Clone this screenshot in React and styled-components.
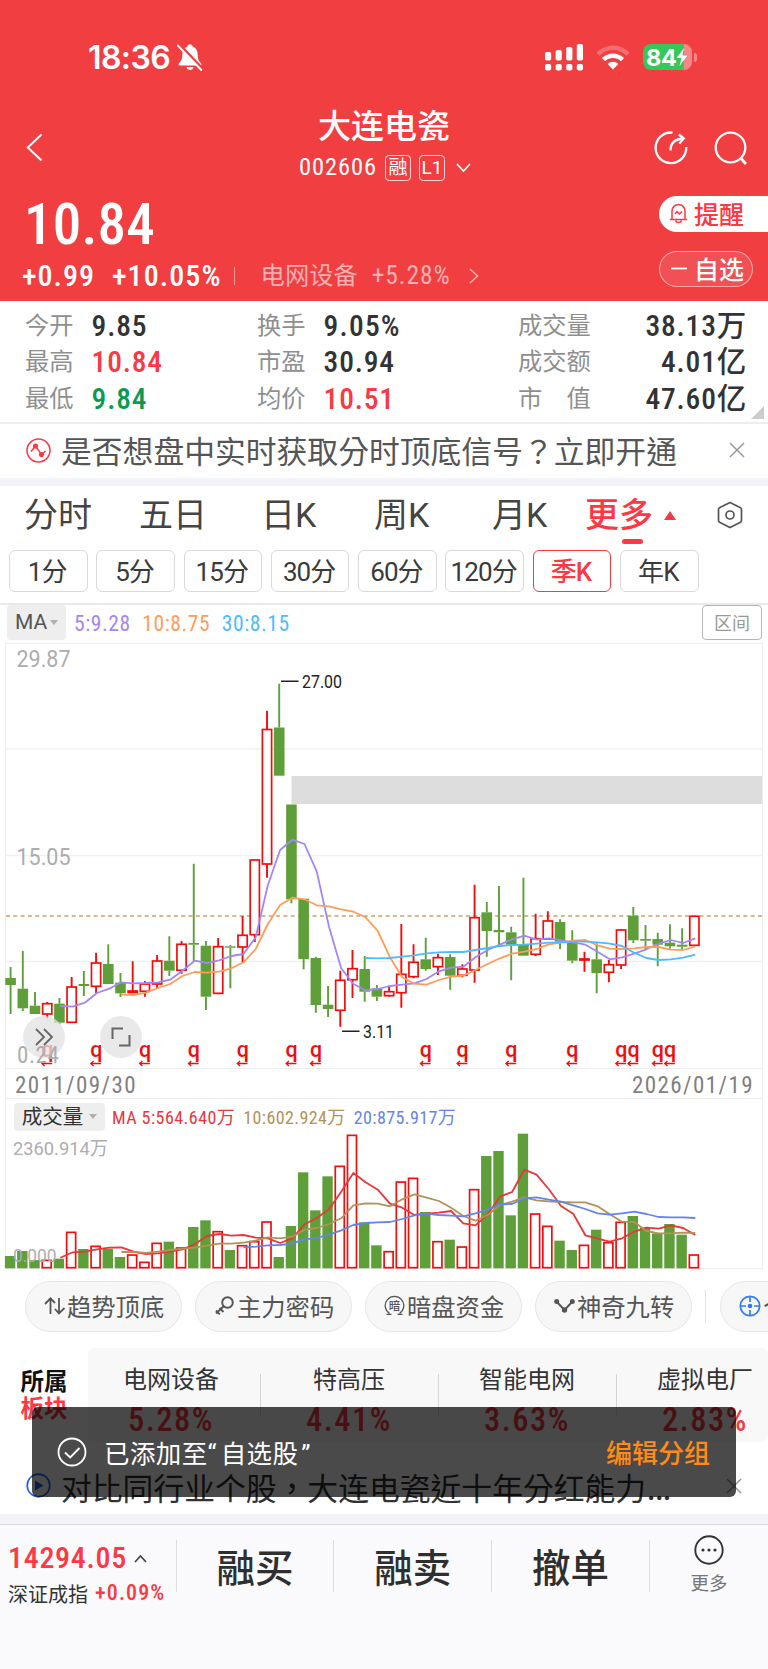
import React from "react";
import styled, { createGlobalStyle, css } from "styled-components";

const RED = "#fb3844";
const UP = "#f20d0d";
const DOWN = "#5e9f3a";

const GlobalStyle = createGlobalStyle`
* {
  box-sizing: border-box;
}
body {
  margin: 0;
  background: #fff;
  font-family: Roboto, "Noto Sans CJK SC", sans-serif;
  color: #333;
}
svg {
  display: block;
  flex: none;
}
`;

const Page = styled.div`
  position: relative;
  width: 768px;
  height: 1669px;
  overflow: hidden;
  display: flex;
  flex-direction: column;
`;

const Num = styled.span`
  font-family: Roboto, "Noto Sans CJK SC", sans-serif;
  font-stretch: condensed;
  font-size: ${(p) => p.$size}px;
  font-weight: ${(p) => p.$weight || 500};
  letter-spacing: ${(p) => p.$gap || 0}px;
  line-height: ${(p) => p.$line || p.$size}px;
  color: ${(p) => p.$color || "inherit"};
  white-space: nowrap;
`;

/* ---------- header ---------- */

const Header = styled.header`
  flex: none;
  height: 301px;
  background: #f03e41;
  color: #fff;
`;

const StatusBar = styled.div`
  height: 100px;
  padding: 14px 71px 0 88px;
  display: flex;
  align-items: center;
`;

const Clock = styled.span`
  width: 89px;
  font-family: Inter, sans-serif;
  font-size: 32px;
  font-weight: 600;
  letter-spacing: -0.6px;
`;

const StatusIcons = styled.div`
  margin-left: auto;
  display: flex;
  align-items: center;
  gap: 13px;
`;

const TitleBar = styled.div`
  height: 92px;
  padding: 0 20px 0 26px;
  display: grid;
  grid-template-columns: 90px 1fr 96px;
`;

const TitleBlock = styled.div`
  display: flex;
  flex-direction: column;
  align-items: center;
`;

const Title = styled.h1`
  margin: 3px 0 0;
  font-size: 33px;
  line-height: 48px;
  font-weight: 500;
`;

const CodeLine = styled.div`
  height: 33px;
  padding-left: 4px;
  display: flex;
  align-items: center;
  gap: 8px;
`;

const Tag = styled.span`
  width: 26px;
  height: 26px;
  border: 1.5px solid rgba(255, 255, 255, 0.8);
  border-radius: 4px;
  display: flex;
  align-items: center;
  justify-content: center;
  font-size: 19px;
  line-height: 20px;
`;

const TitleIcons = styled.div`
  display: flex;
  justify-content: flex-end;
  gap: 26px;
  padding-top: 31px;
`;

const BackIcon = styled.div`
  padding-top: 33px;
`;

const Quote = styled.div`
  height: 109px;
  display: flex;
  justify-content: space-between;
`;

const QuoteLeft = styled.div`
  display: flex;
  flex-direction: column;
`;

const Price = styled.div`
  height: 62px;
  display: flex;
  align-items: center;
  padding: 2px 0 0 24px;
`;

const ChangeLine = styled.div`
  height: 44px;
  padding: 0 0 1px 22px;
  display: flex;
  align-items: center;
`;

const Divider = styled.i`
  flex: none;
  width: 1px;
  height: ${(p) => p.$h}px;
  background: ${(p) => p.$color};
  margin: ${(p) => p.$m || 0};
`;

const Sector = styled.span`
  font-size: 24.3px;
  line-height: 30px;
  color: rgba(255, 255, 255, 0.6);
  margin-right: 14px;
`;

const QuoteButtons = styled.div`
  width: 109px;
  padding-top: 4px;
  display: flex;
  flex-direction: column;
  gap: 19px;
`;

const Pill = styled.button`
  height: 36px;
  margin: 0;
  padding: 0 0 2px 10px;
  border: none;
  font-family: inherit;
  font-size: 25px;
  font-weight: 500;
  display: flex;
  align-items: center;
  gap: 6px;
  ${(p) =>
    p.$solid
      ? css`
          background: #fff;
          color: ${RED};
          border-radius: 18px 0 0 18px;
        `
      : css`
          width: 94px;
          background: rgba(255, 255, 255, 0.1);
          color: #fff;
          border: 1px solid rgba(255, 255, 255, 0.5);
          border-radius: 18px;
        `}
`;

/* ---------- stats ---------- */

const Stats = styled.section`
  position: relative;
  flex: none;
  height: 123px;
  padding: 7px 21px 0 25px;
  border-bottom: 2px solid #eee;
  display: grid;
  grid-template-columns: 232px 261px 1fr;
  grid-auto-rows: 36.6px;
`;

const Stat = styled.div`
  display: flex;
  align-items: center;
  justify-content: ${(p) => (p.$spread ? "space-between" : "flex-start")};
  gap: 18px;
`;

const StatLabel = styled.span`
  font-size: 24.3px;
  line-height: 30px;
  padding-bottom: 1px;
  color: #8f8f8f;
`;

const Corner = styled.i`
  position: absolute;
  right: 4px;
  bottom: 3px;
  border-style: solid;
  border-width: 0 0 13px 13px;
  border-color: transparent transparent #ccc transparent;
`;

const Notice = styled.div`
  flex: none;
  height: ${(p) => p.$h}px;
  padding: ${(p) => p.$pad};
  display: flex;
  align-items: center;
  font-family: Roboto, "Noto Sans CJK TC", sans-serif;
`;

const NoticeText = styled.span`
  flex: 1;
  margin-left: 10px;
  padding-top: 6px;
  font-size: 30.8px;
  line-height: 40px;
  white-space: nowrap;
  color: ${(p) => p.$color};
`;

const Ellipsis = styled.span`
  font-family: Roboto, sans-serif;
  font-size: 38px;
  line-height: 1;
`;

const Band = styled.div`
  flex: none;
  height: ${(p) => p.$h}px;
  background: #f3f4f9;
`;

/* ---------- period tabs ---------- */

const Tabs = styled.nav`
  flex: none;
  height: 61px;
  padding: 0 26px 3px 24px;
  display: grid;
  grid-template-columns: 115px 122px 113px 118px 93px 132px 1fr;
  align-items: center;
`;

const Tab = styled.span`
  position: relative;
  display: flex;
  align-items: center;
  gap: 11px;
  font-size: 34px;
  line-height: 58px;
  font-weight: ${(p) => (p.$active ? 500 : 400)};
  color: ${(p) => (p.$active ? RED : "#444")};
`;

const Underline = styled.i`
  position: absolute;
  left: 37px;
  bottom: 0;
  width: 21px;
  height: 5px;
  border-radius: 3px;
  background: ${RED};
`;

const Periods = styled.div`
  flex: none;
  height: 56px;
  padding: 3px 9px 0;
  display: flex;
  gap: 8.8px;
`;

const Period = styled.button`
  flex: none;
  width: 78.5px;
  height: 42px;
  padding: 0 2px 4px 0;
  background: #fff;
  border: 1.3px solid ${(p) => (p.$active ? RED : "#d9d9d9")};
  border-radius: 6px;
  color: ${(p) => (p.$active ? RED : "#3a3a3a")};
  font-family: inherit;
  font-size: 26px;
  font-weight: ${(p) => (p.$active ? 500 : 400)};
  letter-spacing: -0.9px;
  white-space: nowrap;
  display: flex;
  align-items: center;
  justify-content: center;
`;

/* ---------- chart ---------- */

const ChartHead = styled.div`
  flex: none;
  height: 40px;
  border-top: 2px solid #e9e9e9;
  padding: 0 6px 0 7px;
  display: flex;
  align-items: flex-start;
`;

const Picker = styled.div`
  width: ${(p) => p.$w}px;
  height: ${(p) => p.$h}px;
  background: #eee;
  border-radius: 4px;
  display: flex;
  align-items: center;
  justify-content: center;
  gap: ${(p) => p.$gap}px;
  font-size: ${(p) => p.$size}px;
  line-height: ${(p) => p.$h}px;
  color: ${(p) => p.$color};
`;

const Legend = styled.div`
  display: flex;
  margin-left: ${(p) => p.$left}px;
  gap: ${(p) => p.$space}px;
`;

const RangeButton = styled.button`
  margin-left: auto;
  width: 60px;
  height: 35px;
  padding: 0 0 2px;
  background: #fff;
  border: 1.4px solid #b5b5b5;
  border-radius: 4px;
  color: #999;
  font-family: inherit;
  font-size: 18px;
`;

const ChartFrame = styled.section`
  position: relative;
  flex: none;
  width: 758px;
  margin-left: 5px;
  border: 1px solid #ededed;
  svg {
    overflow: visible;
  }
`;

const Dates = styled.div`
  height: 31px;
  padding: 4px 8px 0 9px;
  border-top: 1px solid #ededed;
  border-bottom: 1px solid #ededed;
  display: flex;
  align-items: center;
  justify-content: space-between;
`;

const VolumeHead = styled.div`
  height: 34px;
  padding: 4px 8px 0;
  display: flex;
  align-items: flex-start;
`;

const RoundButton = styled.div`
  position: absolute;
  left: ${(p) => p.$left}px;
  top: 372px;
  width: 42px;
  height: 42px;
  border-radius: 50%;
  background: rgba(226, 226, 226, 0.75);
  display: flex;
  align-items: center;
  justify-content: center;
`;

/* ---------- tools and sectors ---------- */

const Tools = styled.div`
  flex: none;
  height: 79px;
  padding: 12px 0 0 25px;
  display: flex;
`;

const Tool = styled.div`
  flex: none;
  width: 157px;
  height: 51px;
  margin-right: 13px;
  padding: 0 0 2px 18px;
  border: 1px solid #e6e6e6;
  border-radius: 26px;
  background: #f7f7f7;
  color: #555;
  font-size: 24.3px;
  display: flex;
  align-items: center;
  gap: 2px;
  white-space: nowrap;
`;

const Sectors = styled.section`
  flex: none;
  height: 94px;
  display: flex;
`;

const SectorsTitle = styled.div`
  width: 88px;
  padding: 21px 0 0 20.5px;
  font-size: 23.5px;
  line-height: 27px;
  font-weight: 700;
  color: #111;
  em {
    font-style: normal;
    color: ${RED};
  }
`;

const SectorsPanel = styled.div`
  flex: 1;
  background: #f8f8f8;
  border-radius: 6px;
  display: flex;
  overflow: hidden;
`;

const SectorItem = styled.div`
  position: relative;
  flex: none;
  width: ${(p) => (p.$first ? 172 : 178)}px;
  padding-top: 15px;
  padding-right: ${(p) => (p.$first ? 6 : 0)}px;
  display: flex;
  flex-direction: column;
  align-items: center;
  font-size: 24px;
  line-height: 34px;
  &:not(:first-child)::before {
    content: "";
    position: absolute;
    left: 0;
    top: 26px;
    width: 1px;
    height: 42px;
    background: #d5d5d5;
  }
`;

const Toast = styled.div`
  position: absolute;
  left: 32px;
  top: 1407px;
  width: 704px;
  height: 90px;
  padding: 0 26px 1px 25px;
  border-radius: 6px;
  background: rgba(0, 0, 0, 0.71);
  color: #fff;
  font-size: 26px;
  display: flex;
  align-items: center;
`;

const ToastText = styled.span`
  flex: 1;
  margin-left: 17px;
  font-size: 25.5px;
  letter-spacing: 0.4px;
`;

const Quotes = styled.span`
  letter-spacing: ${(p) => p.$gap}px;
  margin-left: ${(p) => p.$left || 0}px;
`;

const ToastLink = styled.span`
  color: #ff8a16;
  font-weight: 500;
`;

/* ---------- bottom bar ---------- */

const BottomBar = styled.footer`
  flex: 1;
  border-top: 1px solid #dcdde2;
  background: #fafafc;
  padding-top: 9px;
  display: flex;
  align-items: flex-start;
`;

const IndexBox = styled.div`
  width: 176px;
  padding: 6px 0 0 8px;
`;

const IndexLine = styled.div`
  height: ${(p) => p.$h}px;
  display: flex;
  align-items: center;
  gap: 7px;
  font-size: 20px;
  white-space: nowrap;
`;

const Action = styled.div`
  width: 158px;
  height: 52px;
  margin-top: 6px;
  padding-top: 5px;
  border-left: 1px solid #dcdcdc;
  display: flex;
  align-items: center;
  justify-content: center;
  font-size: 38.5px;
  line-height: 50px;
  font-weight: 500;
  color: #2f2f2f;
`;

const More = styled.div`
  width: 118px;
  height: 64px;
  display: flex;
  flex-direction: column;
  align-items: center;
  font-size: 18.5px;
  line-height: 24px;
  color: #777;
  gap: 7px;
  padding-top: 1px;
`;

const MoreCell = styled.div`
  flex: 1;
  display: flex;
  align-items: flex-start;
`;

/* ---------- data ---------- */

// up flag, high, low, body top, body bottom
const candles = [
  [0, 967, 1014, 978, 985],
  [0, 951, 1011, 988.7, 1008.3],
  [0, 992, 1014, 1005.7, 1014],
  [1, 1002, 1018.5, 1003.7, 1014],
  [0, 998, 1024.3, 1003.7, 1022.7],
  [1, 977, 1022.7, 987, 1022.3],
  [0, 971, 996, 984, 986],
  [1, 952.7, 993, 963, 986.3],
  [0, 944.3, 984, 964, 984],
  [0, 973, 997, 982.7, 993.3],
  [1, 961.3, 993, 991, 992.5],
  [1, 981, 996.7, 984, 991.3],
  [1, 955, 989, 961, 984],
  [0, 936.3, 976, 960.7, 970.7],
  [1, 941, 973.7, 944.3, 970.3],
  [0, 863.7, 961, 943, 944.7],
  [0, 941, 1010, 945.7, 996.7],
  [1, 938, 994.3, 946.7, 993.3],
  [0, 945, 988.3, 946.3, 947.7],
  [1, 916, 962, 935.3, 947],
  [1, 860, 942, 860, 934.7],
  [1, 710.7, 877.7, 729.5, 864],
  [0, 683.7, 775.7, 727.5, 775.7],
  [0, 804.5, 903.3, 804.5, 899.3],
  [0, 898.7, 969.3, 898.7, 959],
  [0, 956.7, 1012.7, 958, 1005],
  [0, 986, 1017, 1004.7, 1009],
  [1, 970.7, 1026.7, 980.3, 1010.3],
  [1, 950, 998, 968.7, 979.7],
  [0, 956, 1001.7, 969, 991.7],
  [0, 985, 1001, 988.3, 996.7],
  [1, 985.7, 996.7, 991.7, 995.7],
  [1, 924, 1007.7, 974.3, 992.7],
  [1, 944.3, 978.3, 962.3, 976.7],
  [0, 937.7, 970.7, 959.3, 969],
  [1, 953.7, 975, 957.7, 966.7],
  [0, 954.3, 989.7, 957, 975.7],
  [1, 964.3, 977.3, 969, 975.3],
  [1, 884.7, 982.7, 917.7, 970],
  [0, 902, 956.7, 912.3, 931],
  [0, 886, 946.7, 930, 932.3],
  [0, 926.7, 980.3, 932.3, 944.7],
  [0, 877.7, 955.7, 944.7, 955.7],
  [1, 913.7, 956, 938.7, 954.3],
  [1, 911.3, 939.3, 921, 939],
  [0, 919.3, 949, 922, 941.7],
  [0, 930.3, 963.3, 941.7, 960.7],
  [1, 951.7, 971.7, 959, 959.6],
  [0, 943.3, 993.3, 959.3, 973],
  [1, 960, 982.3, 964.7, 972.3],
  [1, 929.3, 969, 930, 965],
  [0, 907, 943, 915.7, 940.3],
  [0, 925, 949, 939, 940.7],
  [0, 932.7, 966.3, 939, 944.7],
  [0, 924.3, 948.7, 942.7, 946.3],
  [0, 928.3, 950, 944.7, 946.7],
  [1, 916, 946, 916.3, 945.3],
];

const ma5 = [468, 470, 458, 429, 416, 397, 400, 399, 397, 389, 362, 332, 339, 331, 318, 312, 262, 105, 0, -31, -18, 65, 230, 355, 402, 421, 417, 408, 404, 400, 387, 364, 353, 350, 322, 300, 284, 268, 257, 269, 265, 271, 277, 284, 305, 328, 322, 311, 298, 281, 270, 279, 265];
const ma10 = [434, 435, 428, 414, 402, 378, 366, 368, 365, 355, 337, 297, 222, 165, 143, 148, 166, 169, 178, 185, 202, 243, 322, 382, 401, 404, 390, 380, 377, 360, 342, 325, 311, 305, 297, 283, 278, 272, 270, 286, 296, 297, 295, 291, 291, 299, 300, 289];
const ma30 = [324, 325, 324, 320, 316, 310, 307, 306, 306, 300, 294, 288, 285, 284, 281, 278, 277, 275, 275, 277, 281, 288, 308, 324, 330, 328, 323, 314];

const volumes = [483, 468, 495, 494, 491, 410, 462, 452, 461, 486, 478, 500, 443, 440, 457, 396, 376, 408, 465, 450, 438, 379, 486, 393, 232, 346, 244, 212, 119, 382, 451, 468, 259, 248, 351, 438, 434, 454, 282, 183, 168, 361, 116, 355, 392, 437, 465, 449, 404, 441, 380, 363, 397, 415, 387, 419, 478];
const vma5 = [488, 472, 470, 463, 458, 457, 470, 477, 475, 470, 463, 448, 423, 417, 422, 420, 428, 430, 444, 430, 388, 369, 343, 290, 234, 262, 284, 326, 338, 360, 356, 353, 348, 385, 391, 358, 305, 291, 224, 239, 282, 333, 356, 421, 431, 440, 430, 410, 398, 401, 391, 399, 420];
const vma10 = [471, 471, 474, 470, 465, 461, 458, 452, 446, 446, 443, 437, 427, 430, 425, 404, 399, 387, 370, 331, 325, 326, 334, 313, 298, 308, 318, 338, 363, 377, 360, 330, 320, 307, 316, 319, 321, 322, 322, 334, 358, 380, 381, 408, 415, 415, 413, 414];
const vma20 = [457, 455, 451, 450, 445, 433, 429, 419, 406, 390, 384, 382, 381, 372, 361, 356, 360, 362, 364, 355, 344, 328, 327, 310, 307, 314, 320, 331, 342, 355, 359, 355, 350, 357, 366, 367, 367, 369];

const marks = [3, 7, 11, 15, 19, 23, 25, 34, 37, 41, 46, 50, 51, 53, 54];

const stats = [
  ["今开", "9.85"],
  ["换手", "9.05%"],
  ["成交量", "38.13万"],
  ["最高", "10.84", RED],
  ["市盈", "30.94"],
  ["成交额", "4.01亿"],
  ["最低", "9.84", "#0a9a50"],
  ["均价", "10.51", RED],
  ["市　值", "47.60亿"],
];

const periods = ["1分", "5分", "15分", "30分", "60分", "120分", "季K", "年K"];

const sectors = [
  ["电网设备", "5.28%"],
  ["特高压", "4.41%"],
  ["智能电网", "3.63%"],
  ["虚拟电厂", "2.83%"],
];

const cx = (i) => 10.6 + i * 12.21;
const line = (values, base) =>
  values
    .map((v, i) => `${(cx(57 - values.length + i) + 0.9).toFixed(1)},${(base + v / 3).toFixed(1)}`)
    .join(" ");

/* ---------- drawings ---------- */

function Label({ x, y, w, size, fill, children }) {
  return (
    <text
      x={x}
      y={y}
      textLength={w}
      lengthAdjust="spacingAndGlyphs"
      fontSize={size}
      fill={fill}
    >
      {children}
    </text>
  );
}

function PriceChart() {
  return (
    <svg width="756" height="424" viewBox="6 644 756 424">
      {[749, 855.5, 961.5].map((y) => (
        <path key={y} d={`M6 ${y}H762`} stroke="#f1f1f1" strokeWidth="1.4" />
      ))}
      <rect x="291.5" y="776" width="470.5" height="28" fill="#ddd" />
      <path d="M6 916H762" stroke="#d9b98c" strokeWidth="1.8" strokeDasharray="4 3.3" />
      {candles.map(([up, high, low, top, bottom], i) => {
        const x = cx(i);
        const color = up ? UP : DOWN;
        const h = Math.max(bottom - top, 1);
        return (
          <g key={i}>
            <path d={`M${x} ${high}V${top}M${x} ${bottom}V${low}`} stroke={color} strokeWidth="1.9" />
            {up ? (
              <rect x={x - 4.6} y={top} width="9.2" height={h} fill="#fff" stroke={color} strokeWidth="1.7" />
            ) : (
              <rect x={x - 5.3} y={top} width="10.6" height={h} fill={color} />
            )}
          </g>
        );
      })}
      <g fill="none" strokeWidth="1.8" strokeLinejoin="round">
        <polyline points={line(ma5, 850)} stroke="#a287f4" />
        <polyline points={line(ma10, 850)} stroke="#ff9c59" />
        <polyline points={line(ma30, 850)} stroke="#4dbcfc" />
      </g>
      <path d="M281 681.3H298.5M342 1031.3H359.5" stroke="#222" strokeWidth="1.6" />
      <Label x={302} y={687.7} w={40} size={17.5} fill="#222">27.00</Label>
      <Label x={363} y={1037.7} w={31} size={17.5} fill="#222">3.11</Label>
      <Label x={16.5} y={666.7} w={54} size={23} fill="#adadad">29.87</Label>
      <Label x={16.5} y={865} w={54} size={23} fill="#adadad">15.05</Label>
      {marks.map((i) => (
        <g key={i} fill={UP}>
          <text x={cx(i) + 0.2} y="1057" fontSize="21.5" fontWeight="500" textAnchor="middle">q</text>
          <path
            d={`M${cx(i) + 5} 1063.5h-10M${cx(i) - 2.5} 1061l-2.8 2.5l2.8 2.5`}
            fill="none"
            stroke={UP}
            strokeWidth="1.3"
          />
        </g>
      ))}
    </svg>
  );
}

function VolumeChart() {
  return (
    <svg width="756" height="135" viewBox="6 1133 756 135">
      <Label x={13} y={1154.5} w={95} size={19} fill="#adadad">2360.914万</Label>
      {volumes.map((v, i) => {
        const top = 1095 + v / 3;
        const x = cx(i) - 0.5;
        return candles[i][0] ? (
          <rect key={i} x={x - 4.5} y={top + 0.7} width="9" height={1267 - top} fill="#fff" stroke={UP} strokeWidth="1.7" />
        ) : (
          <rect key={i} x={x - 5.2} y={top} width="10.4" height={1268.3 - top} fill={DOWN} />
        );
      })}
      <g fill="none" strokeWidth="1.8" strokeLinejoin="round">
        <polyline points={line(vma5, 1095)} stroke="#e8373c" />
        <polyline points={line(vma10, 1095)} stroke="#b39158" />
        <polyline points={line(vma20, 1095)} stroke="#6684e8" />
      </g>
      <Label x={13} y={1261.5} w={43.5} size={19} fill="#adadad">0.000</Label>
    </svg>
  );
}

const LowLabel = styled(Num)`
  position: absolute;
  left: 11px;
  top: 398px;
`;

function BellOff() {
  return (
    <svg width="26" height="28" viewBox="0 0 26 28">
      <path
        d="M13 1.200c1.400 0 2.400.8 2.600 2.200C19 4.600 20.700 7.500 20.700 11.500c0 5 1.300 6.600 3.300 8.700.8.900.5 2.300-.9 2.300H2.900c-1.400 0-1.700-1.400-.9-2.300 2-2.100 3.300-3.700 3.300-8.700 0-4 1.700-6.900 5.100-8.100.2-1.400 1.200-2.200 2.600-2.200zM9.500 24h7c-.3 1.900-1.700 3-3.500 3s-3.200-1.100-3.500-3z"
        fill="#fff"
      />
      <path d="M2.500 1.500l23 24" stroke="#f03e41" strokeWidth="2.600" />
      <path d="M.8 2.500l23.500 24.500" stroke="#fff" strokeWidth="1.900" strokeLinecap="round" />
    </svg>
  );
}

function Signal() {
  return (
    <svg width="38" height="27" viewBox="0 0 38 27" fill="#fff">
      <rect x="0" y="8" width="6.200" height="8.500" rx="1.800" />
      <rect x="10.600" y="6" width="6.200" height="10.500" rx="1.800" />
      <rect x="21.200" y="3" width="6.200" height="13.500" rx="1.800" />
      <rect x="31.800" y="0" width="6.200" height="16.500" rx="1.800" />
      {[0, 10.6, 21.2, 31.8].map((x) => (
        <rect key={x} x={x} y="20" width="6.2" height="6.600" rx="1.800" />
      ))}
    </svg>
  );
}

function Wifi() {
  return (
    <svg width="34" height="25" viewBox="0 0 34 25" fill="none">
      <path d="M2 9.300C10.500 .6 23.500 .6 32 9.300" stroke="rgba(255,255,255,.25)" strokeWidth="4.400" />
      <path d="M7.500 14.700c5.500-5.300 13.500-5.300 19 0" stroke="#fff" strokeWidth="4.600" />
      <path d="M17 24.500l-5.300-5.600c3-2.900 7.600-2.900 10.600 0z" fill="#fff" />
    </svg>
  );
}

const BatteryBox = styled.div`
  display: flex;
  align-items: center;
  gap: 2px;
`;

const BatteryBody = styled.div`
  width: 49px;
  height: 26px;
  border-radius: 8px;
  background: linear-gradient(to right, #34c759 41px, rgba(255, 255, 255, 0.38) 41px);
  display: flex;
  align-items: center;
  padding-left: 3px;
  font-family: Inter, sans-serif;
  font-size: 23.5px;
  font-weight: 700;
  letter-spacing: -0.4px;
`;

const BatteryTip = styled.i`
  width: 3px;
  height: 9px;
  border-radius: 0 3px 3px 0;
  background: rgba(255, 255, 255, 0.38);
`;

function CloseIcon({ color = "#999" }) {
  return (
    <svg width="16" height="16" viewBox="0 0 16 16">
      <path d="M1 1l14 14M15 1L1 15" stroke={color} strokeWidth="1.5" />
    </svg>
  );
}

function Caret({ size = 8 }) {
  return (
    <svg width={size} height={size * 0.65} viewBox="0 0 8 5">
      <path d="M0 0h8L4 5z" fill="#b0b0b0" />
    </svg>
  );
}

const toolIcons = [
  <svg key="a" width="21" height="20" viewBox="0 0 21 20" fill="none" stroke="#555" strokeWidth="1.8">
    <path d="M6.500 18V2.500M1 8l5.500-5.600L11 7M15 2v15.500M11 13l4 4.500 5.500-5.500" />
  </svg>,
  <svg key="b" width="21" height="21" viewBox="0 0 21 21" fill="none" stroke="#555" strokeWidth="1.900">
    <circle cx="13.500" cy="7.500" r="5.300" />
    <path d="M9.700 11.300L2 18.500M5.500 13l4 4M2 15.500l3.800 3.800" />
  </svg>,
  <svg key="c" width="21" height="21" viewBox="0 0 21 21" fill="none" stroke="#555" strokeWidth="1.300">
    <path d="M5.500 18.500a9.300 9.300 0 1 1 10 0M2.500 19.300h5M13.500 19.300h5" />
    <text x="10.500" y="14.800" fontSize="11.500" textAnchor="middle" fill="#555" stroke="none" fontWeight="500">暗</text>
  </svg>,
  <svg key="d" width="21" height="15" viewBox="0 0 21 15" fill="#555">
    <path d="M3 4l7.500 8L18 4" fill="none" stroke="#555" strokeWidth="1.900" />
    <circle cx="2.700" cy="3.500" r="2.500" />
    <circle cx="10.500" cy="12" r="2.700" />
    <circle cx="18.300" cy="3.500" r="2.500" />
  </svg>,
];

const toolNames = ["趋势顶底", "主力密码", "暗盘资金", "神奇九转"];

export default function App() {
  return (
    <>
      <GlobalStyle />
      <Page>
        <Header>
          <StatusBar>
            <Clock>18:36</Clock>
            <BellOff />
            <StatusIcons>
              <Signal />
              <Wifi />
              <BatteryBox>
                <BatteryBody>
                  84
                  <svg width="12" height="18" viewBox="0 0 12 18">
                    <path d="M8 0L.5 10H5.500L3.500 18 11.500 7.500H6.500z" fill="#fff" />
                  </svg>
                </BatteryBody>
                <BatteryTip />
              </BatteryBox>
            </StatusIcons>
          </StatusBar>

          <TitleBar>
            <BackIcon>
              <svg width="17" height="29" viewBox="0 0 17 29">
                <path d="M15.500 1.500L1.800 14.500l13.700 13" fill="none" stroke="#fff" strokeWidth="2" />
              </svg>
            </BackIcon>
            <TitleBlock>
              <Title>大连电瓷</Title>
              <CodeLine>
                <Num $size={24.5} $weight={400} $gap={0.9}>002606</Num>
                <Tag>融</Tag>
                <Tag>L1</Tag>
                <svg width="20" height="10" viewBox="-4 0 20 10">
                  <path d="M0 1l6.500 7L13 1" fill="none" stroke="#fff" strokeWidth="1.600" />
                </svg>
              </CodeLine>
            </TitleBlock>
            <TitleIcons>
              <svg width="34" height="34" viewBox="0 0 34 34" fill="none" stroke="#fff" strokeWidth="2.300">
                <path d="M18.500 1.600A15.300 15.300 0 1 0 32.200 16" />
                <path d="M16.500 19.500c0-7 4-11.500 13-12M24.800 3.500l5 4-4.500 5" />
              </svg>
              <svg width="34" height="34" viewBox="0 0 34 34" fill="none" stroke="#fff" strokeWidth="2.300">
                <circle cx="16.500" cy="16.500" r="14.800" />
                <path d="M26.500 27l5.500 6" strokeWidth="2.800" />
              </svg>
            </TitleIcons>
          </TitleBar>

          <Quote>
            <QuoteLeft>
              <Price>
                <Num $size={57} $gap={0.2}>10.84</Num>
              </Price>
              <ChangeLine>
                <Num $size={30} $gap={1}>+0.99</Num>
                <Divider $h={1} $color="transparent" $m="0 16px 0 0" />
                <Num $size={30} $gap={1.1}>+10.05%</Num>
                <Divider $h={18} $color="rgba(255,255,255,.5)" $m="0 26px 0 12px" />
                <Sector>电网设备</Sector>
                <Num $size={25.5} $weight={400} $gap={0.9} $color="rgba(255,255,255,.6)">+5.28%</Num>
                <svg width="28" height="16" viewBox="-18 0 28 16">
                  <path d="M1 1l7.500 7L1 15" fill="none" stroke="rgba(255,255,255,.6)" strokeWidth="1.500" />
                </svg>
              </ChangeLine>
            </QuoteLeft>
            <QuoteButtons>
              <Pill $solid>
                <svg width="19" height="21" viewBox="0 0 19 21" fill="none" stroke={RED} strokeWidth="1.500">
                  <path d="M1 16.500h17M3 16V8a6.500 6.500 0 0 1 13 0v8M6.500 17.500c1 2.700 5 2.700 6 0M6 11l2-2.500 2.500 2.500L13 8.500" />
                </svg>
                提醒
              </Pill>
              <Pill>
                <svg width="18" height="3" viewBox="0 0 18 3">
                  <path d="M1 1.500h16" stroke="#fff" strokeWidth="1.800" />
                </svg>
                自选
              </Pill>
            </QuoteButtons>
          </Quote>
        </Header>

        <Stats>
          {stats.map(([label, value, color], i) => (
            <Stat key={label} $spread={i % 3 === 2}>
              <StatLabel>{label}</StatLabel>
              <Num $size={29.5} $gap={value.endsWith("%") ? 1.2 : 0.8} $color={color}>{value}</Num>
            </Stat>
          ))}
          <Corner />
        </Stats>

        <Notice $h={54} $pad="0 23px 2px 26px">
          <svg width="25" height="25" viewBox="0 0 25 25" fill="none" stroke={RED} strokeWidth="1.500">
            <circle cx="12.500" cy="12.500" r="11.500" />
            <path d="M5 13.500L9.500 8l6 8.500 4-3.500" />
            <circle cx="9.500" cy="8" r="1.800" fill={RED} />
            <circle cx="15.500" cy="16.500" r="1.800" fill={RED} />
          </svg>
          <NoticeText $color="#555">是否想盘中实时获取分时顶底信号？立即开通</NoticeText>
          <CloseIcon />
        </Notice>
        <Band $h={8} />

        <Tabs>
          {["分时", "五日", "日K", "周K", "月K"].map((t) => (
            <Tab key={t}>{t}</Tab>
          ))}
          <Tab $active>
            更多
            <svg width="12" height="9" viewBox="0 0 12 9">
              <path d="M0 9L6 0l6 9z" fill={RED} />
            </svg>
            <Underline />
          </Tab>
          <svg width="26" height="28" viewBox="0 0 26 28" fill="none" stroke="#555" strokeWidth="1.700">
            <path d="M13 1.500l10.500 5.300q1 .5 1 1.700v11q0 1.200-1 1.700L13 26.500 2.500 21.200q-1-.5-1-1.700v-11q0-1.200 1-1.700z" />
            <circle cx="13" cy="14" r="4" />
          </svg>
        </Tabs>

        <Periods>
          {periods.map((p) => (
            <Period key={p} $active={p === "季K"}>{p}</Period>
          ))}
        </Periods>

        <ChartHead>
          <Picker $w={59} $h={35} $size={21} $gap={3} $color="#555">
            MA <Caret />
          </Picker>
          <Legend $left={8} $space={11.5}>
            <Num $size={21.5} $line={37} $weight={400} $gap={0.6} $color="#a287f4">5:9.28</Num>
            <Num $size={21.5} $line={37} $weight={400} $gap={0.6} $color="#ff9c59">10:8.75</Num>
            <Num $size={21.5} $line={37} $weight={400} $gap={0.6} $color="#4dbcfc">30:8.15</Num>
          </Legend>
          <RangeButton>区间</RangeButton>
        </ChartHead>

        <ChartFrame>
          <PriceChart />
          <Dates>
            <Num $size={23} $weight={400} $gap={1.4} $color="#808080">2011/09/30</Num>
            <Num $size={23} $weight={400} $gap={1.4} $color="#808080">2026/01/19</Num>
          </Dates>
          <VolumeHead>
            <Picker $w={91} $h={28} $size={20.5} $gap={6} $color="#333">
              成交量 <Caret />
            </Picker>
            <Legend $left={7} $space={8}>
              <Num $size={18} $line={29} $weight={400} $gap={0.45} $color="#e8373c">MA 5:564.640万</Num>
              <Num $size={18} $line={29} $weight={400} $gap={0.4} $color="#b39158">10:602.924万</Num>
              <Num $size={18} $line={29} $weight={400} $gap={0.4} $color="#6684e8">20:875.917万</Num>
            </Legend>
          </VolumeHead>
          <VolumeChart />
          <RoundButton $left={16.5}>
            <svg width="20" height="20" viewBox="0 0 20 20" fill="none" stroke="#666" strokeWidth="1.800">
              <path d="M2 2l8 8-8 8M10 2l8 8-8 8" />
            </svg>
          </RoundButton>
          <RoundButton $left={93.5}>
            <svg width="20" height="20" viewBox="0 0 20 20" fill="none" stroke="#666" strokeWidth="2">
              <path d="M1.500 12V1.500H12M18.500 8v10.500H8" />
            </svg>
          </RoundButton>
          <LowLabel $size={23} $line={27} $weight={400} $gap={0.6} $color="#adadad">0.24</LowLabel>
        </ChartFrame>

        <Tools>
          {toolNames.map((name, i) => (
            <Tool key={name}>
              {toolIcons[i]}
              {name}
            </Tool>
          ))}
          <Divider $h={33} $color="#e2e2e2" $m="9px 14px 0 0" />
          <Tool>
            <svg width="22" height="22" viewBox="0 0 22 22" fill="none" stroke="#2f7cf6" strokeWidth="1.700">
              <circle cx="11" cy="11" r="9.700" />
              <path d="M11 1v6M11 15v6M1 11h6M15 11h6" />
              <circle cx="11" cy="11" r="1.500" fill="#2f7cf6" />
            </svg>
            个股
          </Tool>
        </Tools>

        <Sectors>
          <SectorsTitle>
            所属
            <br />
            <em>板块</em>
          </SectorsTitle>
          <SectorsPanel>
            {sectors.map(([name, pct], i) => (
              <SectorItem key={name} $first={i === 0}>
                {name}
                <Num $size={32.5} $line={46} $gap={1.5} $color={RED}>{pct}</Num>
              </SectorItem>
            ))}
          </SectorsPanel>
        </Sectors>

        <Notice $h={72} $pad="15px 26px 0 26px">
          <svg width="25" height="25" viewBox="0 0 25 25">
            <circle cx="12.500" cy="12.500" r="11.300" fill="none" stroke="#2563eb" strokeWidth="1.700" />
            <path d="M9 7.500v10l8.500-5z" fill="#2563eb" />
          </svg>
          <NoticeText $color="#333">
            对比同行业个股，大连电瓷近十年分红能力<Ellipsis>…</Ellipsis>
          </NoticeText>
          <CloseIcon />
        </Notice>
        <Band $h={10} />

        <BottomBar>
          <IndexBox>
            <IndexLine $h={36}>
              <Num $size={30} $gap={0.7} $color={RED}>14294.05</Num>
              <svg width="13" height="9" viewBox="0 0 13 9">
                <path d="M1 8l5.500-6L12 8" fill="none" stroke="#444" strokeWidth="1.700" />
              </svg>
            </IndexLine>
            <IndexLine $h={34}>
              深证成指
              <Num $size={22} $gap={1.1} $color={RED}>+0.09%</Num>
            </IndexLine>
          </IndexBox>
          <Action>融买</Action>
          <Action>融卖</Action>
          <Action>撤单</Action>
          <MoreCell>
            <Divider $h={52} $color="#dcdcdc" $m="6px 0 0 0" />
            <More>
              <svg width="30" height="30" viewBox="0 0 30 30" fill="#333">
                <circle cx="15" cy="15" r="13.700" fill="none" stroke="#333" strokeWidth="1.900" />
                <circle cx="9" cy="15" r="1.600" />
                <circle cx="15" cy="15" r="1.600" />
                <circle cx="21" cy="15" r="1.600" />
              </svg>
              更多
            </More>
          </MoreCell>
        </BottomBar>

        <Toast>
          <svg width="30" height="30" viewBox="0 0 30 30" fill="none" stroke="#fff" strokeWidth="1.800">
            <circle cx="15" cy="15" r="13.500" />
            <path d="M8 15.500l5.200 5L22.500 11" />
          </svg>
          <ToastText>
            已添加至<Quotes $gap={4}>“</Quotes>自选股<Quotes $gap={0} $left={3}>”</Quotes>
          </ToastText>
          <ToastLink>编辑分组</ToastLink>
        </Toast>
      </Page>
    </>
  );
}
